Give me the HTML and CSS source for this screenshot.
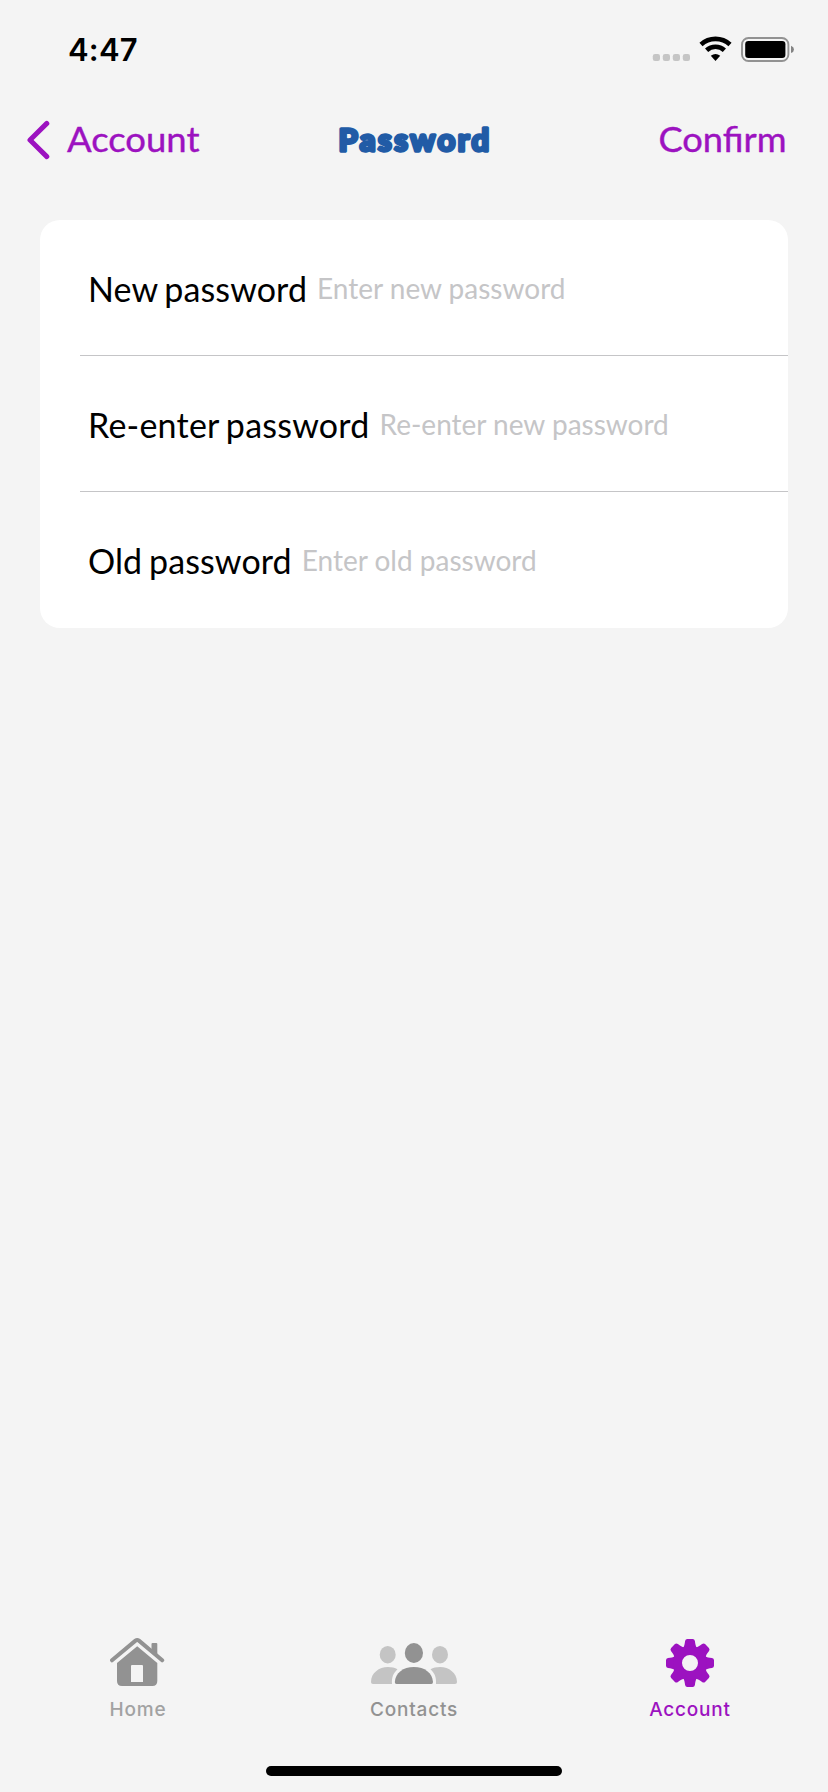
FILE: index.html
```html
<!DOCTYPE html>
<html lang="en">
<head>
<meta charset="utf-8">
<title>Password</title>
<link rel="stylesheet" href="styles.css">
</head>
<body>
<div class="screen">
  <header class="status">
    <span class="time">4:47</span>
    <svg class="status-icons" width="142" height="28" viewBox="0 0 142 28">
      <g fill="#c5c5c5">
        <rect x="0.8" y="18" width="7.2" height="7" rx="2.2"/>
        <rect x="10.8" y="18" width="7.2" height="7" rx="2.2"/>
        <rect x="20.8" y="18" width="7.2" height="7" rx="2.2"/>
        <rect x="30.8" y="18" width="7.2" height="7" rx="2.2"/>
      </g>
      <g fill="none" stroke="#000" stroke-width="4.6">
        <path d="M49 8.5 A21.5 21.5 0 0 1 78 8.5"/>
        <path d="M54.6 14.3 A13 13 0 0 1 72.4 14.3"/>
      </g>
      <path d="M58.8 19.8 Q63.5 16.2 68.2 19.8 L63.5 25 Z" fill="#000"/>
      <rect x="90" y="2" width="46.4" height="23" rx="6.5" fill="none" stroke="#929292" stroke-width="1.9"/>
      <rect x="93.2" y="5" width="40.2" height="17" rx="3.2" fill="#000"/>
      <path d="M139 9.8 Q142 11 142 13.4 Q142 15.8 139 17 Z" fill="#838383"/>
    </svg>
  </header>
  <nav class="navbar">
    <div class="back">
      <svg width="24" height="40" viewBox="0 0 24 40"><path d="M19.8 3.4 L3 20 L19.8 36.6" fill="none" stroke="#9c12c0" stroke-width="5" stroke-linecap="round" stroke-linejoin="round"/></svg>
      <svg class="navtext" width="136" height="48"><text x="1" y="34" textLength="132.5" lengthAdjust="spacingAndGlyphs">Account</text></svg>
    </div>
    <svg class="title" width="160" height="48"><text x="0.5" y="32.5" textLength="150.5" lengthAdjust="spacing">Password</text></svg>
    <svg class="navtext confirm" width="132" height="48"><text x="2.5" y="34" textLength="128" lengthAdjust="spacingAndGlyphs">Confirm</text></svg>
  </nav>
  <main class="card">
    <div class="row"><span class="label">New password</span><span class="hint">Enter new password</span></div>
    <div class="row"><span class="label label-wide">Re-enter password</span><span class="hint">Re-enter new password</span></div>
    <div class="row"><span class="label">Old password</span><span class="hint">Enter old password</span></div>
  </main>
  <footer class="tabs">
    <div class="tab home">
      <svg width="56" height="50" viewBox="110 1637 56 50">
        <path d="M151.5 1651 V1644 Q151.5 1643 152.5 1643 H156.3 Q157.3 1643 157.3 1644 V1657 Z" fill="#929292"/>
        <path d="M112 1660.3 L135.5 1640.6 Q137.2 1639.3 138.9 1640.6 L162.2 1660.3" fill="none" stroke="#929292" stroke-width="4" stroke-linecap="round" stroke-linejoin="round"/>
        <path d="M137.2 1646.3 L157.3 1663 V1681 Q157.3 1686 152.3 1686 H122 Q117 1686 117 1681 V1663 Z M132 1665 Q131 1665 131 1666 V1682 H143 V1666 Q143 1665 142 1665 Z" fill="#929292" fill-rule="evenodd"/>
      </svg>
      <span>Home</span>
    </div>
    <div class="tab contacts">
      <svg width="88" height="50" viewBox="370 1637 88 50">
        <g fill="#c4c4c4">
          <ellipse cx="387.7" cy="1654.7" rx="8" ry="8.7"/>
          <ellipse cx="440" cy="1654.7" rx="8" ry="8.7"/>
          <path d="M373 1684 Q371 1684 371 1682 C371 1673 379 1667 388 1667 C391.5 1667 395 1667.8 397.5 1669.3 C393.5 1673 391.5 1677 392 1684 Z"/>
          <path d="M455 1684 Q457 1684 457 1682 C457 1673 449 1667 440 1667 C436.5 1667 433 1667.8 430.5 1669.3 C434.5 1673 436.5 1677 436 1684 Z"/>
        </g>
        <g fill="#929292">
          <ellipse cx="413.9" cy="1653" rx="9.1" ry="10"/>
          <path d="M396.5 1684 Q394.8 1684 394.8 1682 C395.5 1673 403 1667 413.9 1667 C424.8 1667 432.3 1673 433 1682 Q433 1684 431.3 1684 Z"/>
        </g>
      </svg>
      <span>Contacts</span>
    </div>
    <div class="tab account">
      <svg width="50" height="50" viewBox="-25 -26 50 50">
        <defs><path id="tooth" d="M-7.5 -14 C-5.5 -17 -5.3 -19 -4.9 -22 Q-4.5 -24 -2.7 -24 H2.7 Q4.5 -24 4.9 -22 C5.3 -19 5.5 -17 7.5 -14 Z"/></defs>
        <g fill="#9c12c0">
          <use href="#tooth"/><use href="#tooth" transform="rotate(45)"/><use href="#tooth" transform="rotate(90)"/><use href="#tooth" transform="rotate(135)"/>
          <use href="#tooth" transform="rotate(180)"/><use href="#tooth" transform="rotate(225)"/><use href="#tooth" transform="rotate(270)"/><use href="#tooth" transform="rotate(315)"/>
        </g>
        <circle r="12.5" fill="none" stroke="#9c12c0" stroke-width="9"/>
      </svg>
      <span>Account</span>
    </div>
  </footer>
  <div class="home-indicator"></div>
</div>
</body>
</html>
```
FILE: styles.css
```css
* { box-sizing: border-box; }
body { margin: 0; background: #f4f4f4; }
svg { display: block; flex: none; }
.screen {
  width: 828px;
  height: 1792px;
  display: flex;
  flex-direction: column;
  background: #f4f4f4;
  font-family: Lato, sans-serif;
}
.status {
  height: 100px;
  padding: 34px 34px 0 68px;
  display: flex;
  justify-content: space-between;
  align-items: flex-start;
}
.time {
  font: 600 31px/31px Inter, sans-serif;
  letter-spacing: 0.2px;
}
.status-icons { overflow: visible; margin-top: 2px; }
.navbar {
  height: 120px;
  padding: 18px 40px 0 27px;
  display: grid;
  grid-template-columns: 311px 160px 1fr;
  align-items: start;
}
.back { display: flex; gap: 15px; align-items: flex-start; }
.back svg:first-child { margin-top: 2px; }
.navtext text {
  font: 400 35px Lato, sans-serif;
  fill: #9c12c0;
  stroke: #9c12c0;
  stroke-width: 0.4px;
  stroke-linejoin: round;
}
.title { overflow: visible; }
.title text {
  font: 700 31px Lato, sans-serif;
  fill: #215ba6;
  stroke: #215ba6;
  stroke-width: 3.4px;
  stroke-linejoin: round;
}
.confirm { justify-self: end; }
.card {
  margin: 0 40px;
  height: 408px;
  background: #fff;
  border-radius: 20px;
  display: grid;
  grid-template-rows: 136px 136px 136px;
}
.row {
  margin-left: 40px;
  padding-left: 8px;
  display: flex;
  align-items: center;
  gap: 10px;
  border-bottom: 1px solid #c5c5c7;
}
.row:last-child { border-bottom: 0; padding-bottom: 1px; }
.label {
  font-size: 34px;
  line-height: 42px;
  padding-top: 3px;
  white-space: nowrap;
  letter-spacing: 0.1px;
  word-spacing: -2px;
  color: #000;
}
.label-wide { letter-spacing: 0.22px; }
.hint { font-size: 28px; line-height: 36px; padding-top: 1px; white-space: nowrap; color: #c5c5c7; }
.tabs {
  margin-top: auto;
  height: 129px;
  display: grid;
  grid-template-columns: repeat(3, 276px);
}
.tab {
  display: flex;
  flex-direction: column;
  align-items: center;
  gap: 11px;
  font: 500 19px/24px Inter, sans-serif;
  letter-spacing: 0.8px;
  color: #929292;
}
.tab.home { color: #a2a2a2; }
.tab.account { color: #9c12c0; }
.home-indicator {
  width: 296px;
  height: 10px;
  margin: 0 auto 16px;
  border-radius: 5px;
  background: #000;
}
```
